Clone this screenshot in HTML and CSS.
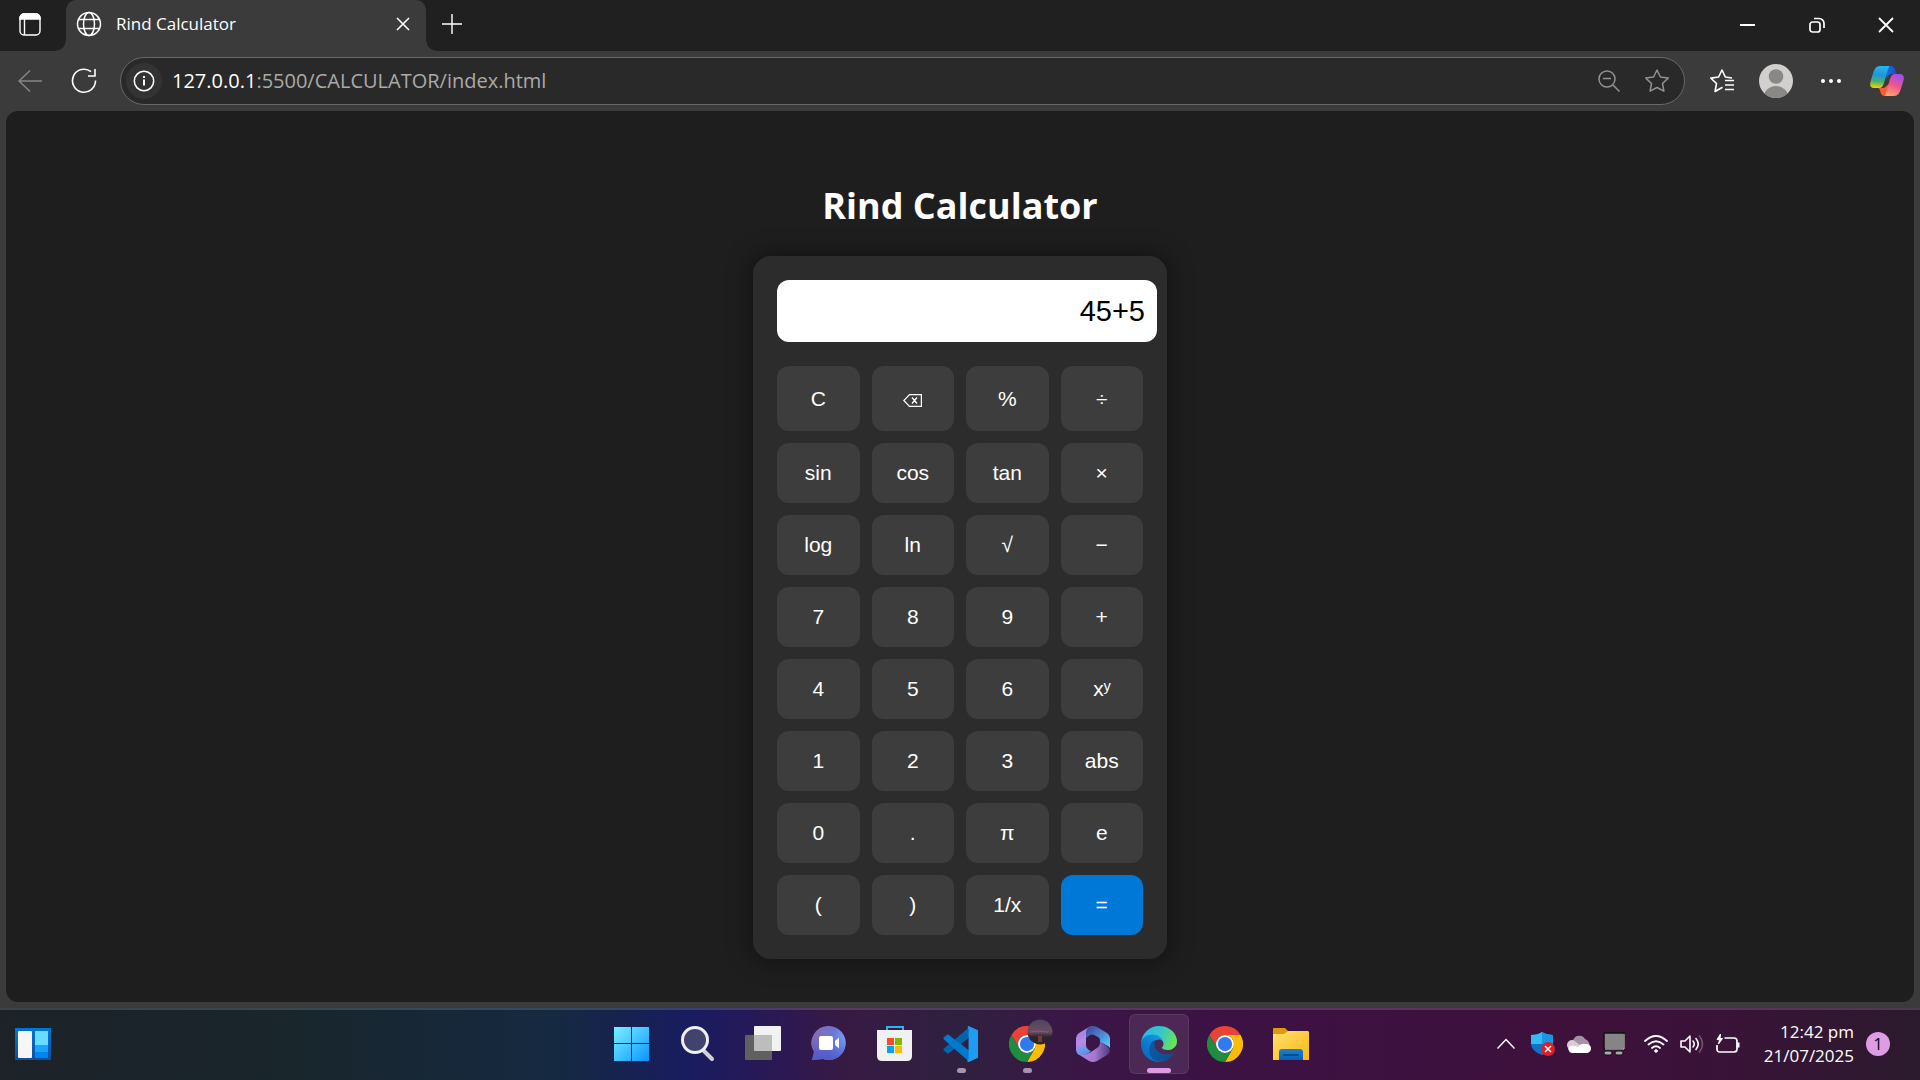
FILE: index.html
```html
<!DOCTYPE html>
<html lang="en">
<head>
<meta charset="utf-8">
<meta name="viewport" content="width=device-width, initial-scale=1">
<title>Rind Calculator</title>
<link rel="stylesheet" href="styles.css">
</head>
<body>
<div class="browser">
  <header class="tabstrip">
    <button class="icon-btn tab-actions" aria-label="Tab actions">
      <svg width="22" height="23" viewBox="0 0 22 23" fill="none" stroke="#fff" stroke-width="1.4"><rect x="1" y="1" width="20" height="21" rx="4"/><path d="M1 6V5a4 4 0 0 1 4-4h12a4 4 0 0 1 4 4v1z" fill="#fff"/><path d="M5.500 6v16"/></svg>
    </button>
    <div class="tab">
      <svg class="globe" width="26" height="26" viewBox="0 0 26 26" fill="none" stroke="#fff" stroke-width="1.500"><circle cx="13" cy="13" r="11.500"/><ellipse cx="13" cy="13" rx="5.500" ry="11.500"/><path d="M2.500 8.500h21M2.500 17.500h21"/></svg>
      <span class="tab-title">Rind Calculator</span>
      <button class="icon-btn" aria-label="Close tab">
        <svg width="14" height="14" viewBox="0 0 14 14" stroke="#fff" stroke-width="1.600"><path d="M1 1l12 12M13 1L1 13"/></svg>
      </button>
    </div>
    <button class="icon-btn new-tab" aria-label="New tab">
      <svg width="22" height="22" viewBox="0 0 22 22" stroke="#fff" stroke-width="1.400"><path d="M11 1v20M1 11h20"/></svg>
    </button>
    <div class="window-controls">
      <button class="icon-btn" aria-label="Minimize"><svg width="16" height="16" viewBox="0 0 16 16" stroke="#fff" stroke-width="2"><path d="M0 8h15"/></svg></button>
      <button class="icon-btn" aria-label="Restore"><svg width="16" height="16" viewBox="0 0 16 16" fill="none" stroke="#fff" stroke-width="1.700"><rect x="1" y="5" width="10" height="10" rx="2.500"/><path d="M5 1.500h5a5 5 0 0 1 5 5V11"/></svg></button>
      <button class="icon-btn" aria-label="Close"><svg width="16" height="16" viewBox="0 0 16 16" stroke="#fff" stroke-width="1.800"><path d="M1 1l14 14M15 1L1 15"/></svg></button>
    </div>
  </header>

  <div class="toolbar">
    <button class="icon-btn" aria-label="Back"><svg width="24" height="24" viewBox="0 0 24 24" fill="none" stroke="#868686" stroke-width="1.500"><path d="M24 12H1M12 1.500L1 12l11 10.500"/></svg></button>
    <button class="icon-btn reload" aria-label="Reload"><svg width="26" height="26" viewBox="0 0 26 26" fill="none" stroke="#fff" stroke-width="1.600"><path d="M20 3.600A11.500 11.500 0 1 0 24.500 12.500M24 1v7h-7"/></svg></button>
    <div class="address">
      <button class="icon-btn site-info" aria-label="Site information"><svg width="22" height="22" viewBox="0 0 22 22" fill="none" stroke="#fff" stroke-width="1.600"><circle cx="11" cy="11" r="9.700"/><path d="M11 9.500v6M11 6v2" stroke-width="2"/></svg></button>
      <a class="url" href="#"><span class="host">127.0.0.1</span>:5500/CALCULATOR/index.html</a>
      <button class="icon-btn" aria-label="Zoom"><svg width="22" height="22" viewBox="0 0 22 22" fill="none" stroke="#929292" stroke-width="1.500"><circle cx="9" cy="9" r="8"/><path d="M15 15l6.500 6.500M5 8.500h8"/></svg></button>
      <button class="icon-btn" aria-label="Add favorite"><svg width="26" height="26" viewBox="0 0 26 26" fill="none" stroke="#929292" stroke-width="1.500" stroke-linejoin="round"><path d="M13 2l3.400 7 7.800 1.100-5.700 5.400 1.400 7.700-6.900-3.700-6.900 3.700 1.400-7.700-5.700-5.400L9.600 9z"/></svg></button>
    </div>
    <button class="icon-btn" aria-label="Favorites"><svg width="26" height="26" viewBox="0 0 26 26" fill="none" stroke="#fff" stroke-width="1.600" stroke-linejoin="round"><path d="M23 10l-6.700-1L13 2 9.600 9l-7.800 1.100 5.700 5.400-1.400 8 7.400-4.200M16 12.500h9M16 17h9M16 21.500h9"/></svg></button>
    <button class="icon-btn avatar" aria-label="Profile"><svg width="34" height="34" viewBox="0 0 34 34"><defs><clipPath id="av"><circle cx="17" cy="17" r="17"/></clipPath></defs><g clip-path="url(#av)"><path fill="#d2d0ce" d="M0 0h34v34H0z"/><circle cx="17" cy="12.500" r="7.300" fill="#8b8784"/><ellipse cx="17" cy="34" rx="12.500" ry="12" fill="#8b8784"/></g></svg></button>
    <button class="icon-btn menu" aria-label="Settings and more"><svg width="20" height="4" viewBox="0 0 20 4" fill="#fff"><circle cx="2" cy="2" r="2"/><circle cx="10" cy="2" r="2"/><circle cx="18" cy="2" r="2"/></svg></button>
    <button class="icon-btn" aria-label="Copilot">
      <svg width="34" height="32" viewBox="0 0 34 32"><defs>
        <linearGradient id="c1" x1=".4" y1="0" x2=".3" y2="1"><stop offset="0" stop-color="#22b9ee"/><stop offset=".4" stop-color="#2292df"/><stop offset=".7" stop-color="#49b26b"/><stop offset="1" stop-color="#ffd000"/></linearGradient>
        <linearGradient id="c2" x1=".7" y1="0" x2=".3" y2="1"><stop offset="0" stop-color="#a04cf0"/><stop offset=".5" stop-color="#ee558f"/><stop offset="1" stop-color="#ffa36b"/></linearGradient>
        <linearGradient id="c3"><stop stop-color="#0a78dc"/><stop offset="1" stop-color="#2346d8"/></linearGradient></defs>
        <path fill="url(#c3)" d="M16 1h4.500c3 0 4.200 2 4.800 4.300L26.500 9h-5c-3 0-4 2-5 5z"/>
        <path fill="#ff5a36" d="M8 23h6l5-4-3 12h-1c-3 0-4-2-4.600-4.300C9.800 24.500 9.300 23 8 23z"/>
        <path fill="url(#c1)" d="M20 1H10C6 1 4.500 4 3.300 7.500L.7 16C-.6 20 .5 23 4 23h5c3 0 4-2 5-5l3.500-12C18.300 3 19 1 20 1z"/>
        <path fill="url(#c2)" d="M14 31h10c4 0 5.500-3 6.700-6.500l2.600-8.500c1.300-4 .2-7-3.300-7h-5c-3 0-4 2-5 5l-3.500 12c-.8 3-1.500 5-2.500 5z"/></svg>
    </button>
  </div>

  <main class="page">
    <h1 class="title">Rind Calculator</h1>
    <section class="calculator" aria-label="Calculator">
      <input class="display" type="text" value="45+5" aria-label="Expression" readonly>
      <div class="keys">
        <button class="key">C</button>
        <button class="key" aria-label="Backspace"><svg width="19" height="16" viewBox="0 -3 19 16" fill="none" stroke="#fff" stroke-width="1.300"><path d="M6.500.600H18.400V12.400H6.500L.8 6.500zM9 3.500l5 6M14 3.500l-5 6"/></svg></button>
        <button class="key">%</button>
        <button class="key">÷</button>
        <button class="key">sin</button>
        <button class="key">cos</button>
        <button class="key">tan</button>
        <button class="key">×</button>
        <button class="key">log</button>
        <button class="key">ln</button>
        <button class="key">√</button>
        <button class="key">−</button>
        <button class="key">7</button>
        <button class="key">8</button>
        <button class="key">9</button>
        <button class="key">+</button>
        <button class="key">4</button>
        <button class="key">5</button>
        <button class="key">6</button>
        <button class="key">xʸ</button>
        <button class="key">1</button>
        <button class="key">2</button>
        <button class="key">3</button>
        <button class="key">abs</button>
        <button class="key">0</button>
        <button class="key">.</button>
        <button class="key">π</button>
        <button class="key">e</button>
        <button class="key">(</button>
        <button class="key">)</button>
        <button class="key">1/x</button>
        <button class="key equals">=</button>
      </div>
    </section>
  </main>
</div>

<footer class="taskbar">
  <div class="widgets">
    <button class="icon-btn" aria-label="Widgets"><svg width="36" height="32" viewBox="0 0 36 32"><defs><linearGradient id="wd" x2="0" y2="1"><stop stop-color="#0078d4"/><stop offset="1" stop-color="#104e9c"/></linearGradient></defs><path fill="url(#wd)" d="M0 0h36v32H0z"/><rect x="3" y="3" width="14" height="27" rx="1" fill="#f6f6f6"/><path fill="#69dcff" d="M20 3h13v14H20z"/><path fill="#1ba4ff" d="M20 17h13v7H20z"/><path fill="#0086f0" d="M20 24h13v6H20z"/></svg></button>
  </div>
  <nav class="apps" aria-label="Apps">
    <button class="app" aria-label="Start"><svg width="36" height="36" viewBox="0 0 36 36"><defs><linearGradient id="st" gradientUnits="userSpaceOnUse" x1="0" y1="0" x2="36" y2="36"><stop stop-color="#7cf4ff"/><stop offset="1" stop-color="#0a94ff"/></linearGradient></defs><path fill="url(#st)" d="M1 1h17v16H1zM19 1h17v16H19zM1 18h17v17H1zM19 18h17v17H19z"/></svg></button>
    <button class="app" aria-label="Search"><svg width="36" height="36" viewBox="0 0 36 36"><path d="M24 24l9 9" stroke="#d2d2d6" stroke-width="4" stroke-linecap="round"/><circle cx="16" cy="14" r="12.500" fill="#42426f" stroke="#efeff1" stroke-width="3"/></svg></button>
    <button class="app" aria-label="Task view"><svg width="36" height="36" viewBox="0 0 36 36"><rect y="9" width="27" height="25" rx="1" fill="#606060"/><rect x="9" width="27" height="25" rx="1" fill="#f2f2f2"/><path fill="#bdbdbd" d="M9 9h18v16H9z"/></svg></button>
    <button class="app" aria-label="Chat"><svg width="36" height="36" viewBox="0 0 36 36"><defs><linearGradient id="ch" x1="0" y1=".2" x2="1" y2=".5"><stop stop-color="#8d68ad"/><stop offset=".6" stop-color="#6878d4"/><stop offset="1" stop-color="#77a8ff"/></linearGradient><linearGradient id="ch2" x2="0" y2="1"><stop offset=".3" stop-color="#5059c9" stop-opacity="0"/><stop offset="1" stop-color="#5059c9"/></linearGradient></defs><path fill="url(#ch)" d="M18 0a17 17 0 1 1-6 33L1 34l2-8A17 17 0 0 1 18 0z"/><path fill="url(#ch2)" d="M18 0a17 17 0 1 1-6 33L1 34l2-8A17 17 0 0 1 18 0z"/><rect x="8" y="10" width="14" height="14" rx="2" fill="#fff"/><path fill="#fff" d="M24 15l4-3.500v11L24 19z"/></svg></button>
    <button class="app" aria-label="Microsoft Store"><svg width="36" height="36" viewBox="0 0 36 36"><path d="M10 7V1h16v6" fill="none" stroke="#2bb5f0" stroke-width="2"/><path fill="#f1f1f1" d="M0 4h35v26q0 5-5 5H5q-5 0-5-5z"/><path fill="#f25022" d="M10 12h7v7h-7z"/><path fill="#7fba00" d="M18 12h7v7h-7z"/><path fill="#00a4ef" d="M10 20h7v7h-7z"/><path fill="#ffb900" d="M18 20h7v7h-7z"/></svg></button>
    <button class="app running" aria-label="Visual Studio Code"><svg width="36" height="36" viewBox="0 0 38 38"><path fill="#0065a9" stroke="#0065a9" stroke-width="3" stroke-linejoin="round" d="M2 25l3 2.500L28 10V3z"/><path fill="#007acc" stroke="#007acc" stroke-width="3" stroke-linejoin="round" d="M2 13l3-2.500L28 28v8z"/><path fill="#1f9cf0" d="M27 0l10 4.500v29L27 38q-2 0-1-2 1 0 1-2V4q0-2-1-2 0-2 1-2z"/></svg></button>
    <button class="app running chrome-profile" aria-label="Google Chrome, profile window">
      <svg width="36" height="36" viewBox="0 0 48 48"><path fill="#ea4335" d="M24 12h20.800A24 24 0 0 0 3.200 12l10.400 18A12 12 0 0 1 24 12z"/><path fill="#fbbc04" d="M34.400 30L24 48A24 24 0 0 0 44.800 12H24a12 12 0 0 1 10.400 18z"/><path fill="#1e8e3e" d="M13.600 30L3.200 12A24 24 0 0 0 24 48l10.400-18a12 12 0 0 1-20.800 0z"/><circle cx="24" cy="24" r="12" fill="#fff"/><circle cx="24" cy="24" r="9.500" fill="#2f7bed"/></svg>
      <svg class="profile-badge" width="26" height="26" viewBox="0 0 26 26"><defs><linearGradient id="pf" x2="0" y2="1"><stop stop-color="#4e4460"/><stop offset=".5" stop-color="#6b4e62"/><stop offset=".7" stop-color="#2e2230"/><stop offset="1" stop-color="#3a2025"/></linearGradient></defs><circle cx="13" cy="13" r="12.500" fill="url(#pf)"/><path d="M4 13l7-1 10 1" stroke="#8a5f68" fill="none"/><path fill="#6a4038" d="M11 17h4v6h-4z"/></svg>
    </button>
    <button class="app" aria-label="Microsoft 365"><svg width="34" height="36" viewBox="0 0 34 36"><defs><linearGradient id="m1" x2=".3" y2="1"><stop stop-color="#9d7ee0"/><stop offset=".6" stop-color="#b88ae8"/><stop offset="1" stop-color="#4d9be8"/></linearGradient><linearGradient id="m2" x2="1" y2="1"><stop stop-color="#3d3f99"/><stop offset=".6" stop-color="#4f93d8"/><stop offset="1" stop-color="#55dcff"/></linearGradient><linearGradient id="m3" x2="1" y2="0"><stop stop-color="#b478dd"/><stop offset=".5" stop-color="#a77bd0"/><stop offset="1" stop-color="#503a83"/></linearGradient></defs><path fill="url(#m1)" d="M13 1L3 7Q0 9 0 12v12q0 3 3 5 7 1 12-4-5-2-5-6v-7q0-5 7-12-2 0-4 1z"/><path fill="url(#m2)" d="M13 1q4-2 8 0l10 6q3 2 3 5v10q-1-2-4-3l-6-3v-2q0-2-2-3l-4-2q-2-1-4 0l-4 3V6q0-3 3-5z"/><path fill="url(#m3)" d="M2 28q7 2 13-2l6-4q3-2 3-6l7 4q6 5 0 9l-10 6q-4 2-8 0z"/></svg></button>
    <button class="app running active" aria-label="Microsoft Edge"><svg width="36" height="36" viewBox="0 0 256 256"><defs><linearGradient id="e1"><stop stop-color="#0c59a4"/><stop offset="1" stop-color="#114a8b"/></linearGradient><linearGradient id="e2" x1=".8" y1="0" x2=".2" y2="1"><stop stop-color="#1b9de2"/><stop offset=".5" stop-color="#0c7bd0"/><stop offset="1" stop-color="#0868b9"/></linearGradient><linearGradient id="e3" x1="0" y1=".3" x2="1" y2=".6"><stop stop-color="#28b8e8"/><stop offset=".5" stop-color="#35c6c8"/><stop offset="1" stop-color="#6be551"/></linearGradient></defs><path fill="url(#e2)" d="M105.730 241.420a79.200 79.200 0 0 1-22.740-21.340 80.720 80.720 0 0 1 29.530-120c3.120-1.470 8.450-4.130 15.540-4a32.350 32.350 0 0 1 25.690 13 31.880 31.880 0 0 1 6.360 18.660c0-.21 24.460-79.600-80-79.600-43.900 0-80 41.660-80 78.210a130.150 130.150 0 0 0 12.110 56 128 128 0 0 0 156.380 67.110 75.550 75.550 0 0 1-62.780-8z"/><path fill="url(#e1)" d="M231.050 190.460a93.730 93.730 0 0 1-10.540 4.710 101.870 101.870 0 0 1-35.900 6.460c-47.320 0-88.540-32.550-88.540-74.320A31.480 31.480 0 0 1 112.500 100c-42.800 1.800-53.800 46.400-53.800 72.530 0 73.880 68.090 81.370 82.760 81.370 7.910 0 19.840-2.300 27-4.560l1.310-.44a128.340 128.340 0 0 0 66.600-52.800 4 4 0 0 0-5.320-5.640z"/><path fill="url(#e3)" d="M152.330 148.860c-.81 1.050-3.300 2.500-3.300 5.660 0 2.610 1.700 5.120 4.720 7.230 14.380 10 41.490 8.680 41.560 8.680a59.560 59.560 0 0 0 30.270-8.350A61.380 61.380 0 0 0 256 109.230c.26-22.410-8-37.310-11.340-43.910C223.460 23.840 177.720 0 128 0A128 128 0 0 0 0 126.200c.48-36.540 36.800-66.050 80-66.050 3.500 0 23.460.34 42 10.070 16.340 8.580 24.900 18.940 30.850 29.210 6.180 10.670 7.280 24.150 7.280 29.520s-2.740 13.330-7.800 19.910z"/></svg></button>
    <button class="app" aria-label="Google Chrome"><svg width="36" height="36" viewBox="0 0 48 48"><path fill="#ea4335" d="M24 12h20.800A24 24 0 0 0 3.200 12l10.400 18A12 12 0 0 1 24 12z"/><path fill="#fbbc04" d="M34.400 30L24 48A24 24 0 0 0 44.800 12H24a12 12 0 0 1 10.400 18z"/><path fill="#1e8e3e" d="M13.600 30L3.200 12A24 24 0 0 0 24 48l10.400-18a12 12 0 0 1-20.800 0z"/><circle cx="24" cy="24" r="12" fill="#fff"/><circle cx="24" cy="24" r="9.500" fill="#2f7bed"/></svg></button>
    <button class="app" aria-label="File Explorer"><svg width="36" height="34" viewBox="0 0 36 34"><defs><linearGradient id="fx" x2="1" y2="1"><stop stop-color="#ffe06e"/><stop offset="1" stop-color="#fcb813"/></linearGradient><linearGradient id="fb" x2="0" y2="1"><stop stop-color="#1683d8"/><stop offset="1" stop-color="#0a5fb0"/></linearGradient></defs><path fill="#dd9b06" d="M0 2q0-1 1-1h11l4 4v3H0z"/><path fill="url(#fx)" d="M0 7h11l4-3h20l1 1v28H0z"/><path fill="url(#fb)" d="M6 33v-8q0-3 3-3h18q3 0 3 3v8z"/><path stroke="#0a4a8c" stroke-width="2" stroke-linecap="round" d="M11 28h14"/></svg></button>
  </nav>
  <div class="tray">
    <button class="icon-btn chevron" aria-label="Hidden icons"><svg width="18" height="12" viewBox="0 0 18 12" fill="none" stroke="#fff" stroke-width="1.500"><path d="M.5 10.500L9 1.500l8.500 9"/></svg></button>
    <svg width="24" height="24" viewBox="0 0 24 24" role="img" aria-label="Security"><path fill="#0c72c7" d="M11 0q4 3 11 3v9q0 7-11 11Q0 19 0 12V3q7 0 11-3z"/><path fill="#31bdf2" d="M11 0q4 3 11 3v9H0V3q7 0 11-3z"/><path fill="#1997e5" d="M11 0q4 3 11 3v9H11z"/><circle cx="17" cy="17" r="7" fill="#e01e28"/><path d="M14 14l6 6M20 14l-6 6" stroke="#fff" stroke-width="1.500"/></svg>
    <svg width="24" height="18" viewBox="0 0 24 18" role="img" aria-label="OneDrive"><path fill="#a590a7" d="M6 6a6.500 6.500 0 0 1 12-2 6 6 0 0 1 4 8H4z"/><path fill="#d5cad6" d="M1 13a5 5 0 0 1 8-6l8 6-4 4H5a5 5 0 0 1-4-4z"/><path fill="#fff" d="M5 18a4 4 0 0 1-2-7q4-1 8 1 3-4 8-3a4.500 4.500 0 0 1 1 9z"/></svg>
    <svg width="22" height="24" viewBox="0 0 22 24" role="img" aria-label="Device"><path fill="#858585" stroke="#111" stroke-width="1.500" d="M1 1h20v16H1z"/><path d="M2 17h19V2" fill="none" stroke="#ddd"/><rect x="1" y="19" width="8" height="4" rx="2" fill="#aaa" stroke="#111"/><rect x="12" y="19" width="8" height="4" rx="2" fill="#aaa" stroke="#111"/></svg>
    <button class="quick" aria-label="Network, sound and battery">
      <svg width="24" height="18" viewBox="0 0 24 18" fill="none" stroke="#fff" stroke-width="1.800" stroke-linecap="round"><path d="M1 6q11-10 22 0M4.500 9.500q7.500-6.500 15 0M8 13q4-3.500 8 0"/><circle cx="12" cy="16" r="1.300" fill="#fff" stroke-width="1"/></svg>
      <svg width="24" height="20" viewBox="0 0 24 20" fill="none" stroke="#fff" stroke-width="1.600" stroke-linecap="round" stroke-linejoin="round"><path d="M1 7v6h4l5 5V2L5 7zM13 7q2.500 3 0 6M16 4.500q4.500 5.500 0 11"/><path d="M19.500 2q6 8 0 16" stroke="#725171"/></svg>
      <svg width="24" height="20" viewBox="0 0 24 20" fill="none" stroke="#fff" stroke-width="1.700"><path d="M8.500 4H18q3 0 3 3v8q0 3-3 3H4q-3 0-3-3v-4"/><path d="M22 8.500v5" stroke-width="3"/><path fill="#fff" stroke-width="1" d="M4.500 0L1 5.500h2.500L2.500 10l4-5.500H4z"/></svg>
    </button>
    <button class="clock"><time>12:42 pm</time><time>21/07/2025</time></button>
    <span class="notice">1</span>
  </div>
</footer>
</body>
</html>
```
FILE: styles.css
```css
* {
  box-sizing: border-box;
}

body {
  margin: 0;
  min-height: 100vh;
  display: flex;
  flex-direction: column;
  background: #3b3b3b;
  color: #fff;
  font-family: "Open Sans", "Noto Sans", sans-serif;
}

button {
  border: 0;
  padding: 0;
  background: none;
  color: inherit;
  font: inherit;
}

svg {
  display: block;
  flex: none;
}

.icon-btn {
  display: flex;
  align-items: center;
  justify-content: center;
}

/* Browser frame */
.browser {
  flex: 1;
  display: flex;
  flex-direction: column;
}

.tabstrip {
  display: flex;
  align-items: center;
  height: 51px;
  padding-right: 26px;
  background: #202020;
}

.tab-actions {
  width: 66px;
  padding: 0 6px 2px 0;
}

.tab {
  position: relative;
  width: 360px;
  height: 51px;
  display: flex;
  align-items: center;
  gap: 14px;
  padding: 0 16px 3px 10px;
  border-radius: 10px 10px 0 0;
  background: #3b3b3b;
}

.tab::before,
.tab::after {
  content: "";
  position: absolute;
  bottom: 0;
  width: 10px;
  height: 10px;
}

.tab::before {
  right: 100%;
  background: radial-gradient(circle at 0 0, #202020 9px, #3b3b3b 10px);
}

.tab::after {
  left: 100%;
  background: radial-gradient(circle at 100% 0, #202020 9px, #3b3b3b 10px);
}

.tab-title {
  flex: 1;
  font-size: 17px;
  line-height: 24px;
}

.new-tab {
  padding: 0 0 4px 15px;
}

.window-controls {
  margin-left: auto;
  padding-bottom: 2px;
  display: flex;
  gap: 53px;
}

.toolbar {
  display: flex;
  align-items: center;
  height: 60px;
  padding: 0 16px 0 18px;
}

.reload {
  margin-left: 29px;
}

.address {
  flex: 1;
  display: flex;
  align-items: center;
  gap: 24px;
  height: 48px;
  margin: 0 24px 0 23px;
  padding: 0 14px 0 5px;
  border: 1px solid #686868;
  border-radius: 24px;
  background: #292929;
}

.site-info {
  width: 36px;
  height: 36px;
  border-radius: 50%;
  background: #333;
}

.url {
  flex: 1;
  margin-left: -14px;
  color: #aaa;
  font-size: 20px;
  line-height: 28px;
  text-decoration: none;
}

.host {
  color: #fff;
}

.avatar {
  margin: 0 28px 0 24px;
}

.menu {
  margin-right: 29px;
}

/* Calculator page */
.page {
  flex: 1;
  display: flex;
  flex-direction: column;
  align-items: center;
  margin: 0 6px 6px;
  padding: 68px 24px 43px;
  border-radius: 12px;
  background: #1e1e1e;
}

.title {
  margin: 0 0 24px;
  font-size: 36px;
  line-height: 53px;
}

.calculator {
  width: 414px;
  padding: 24px;
  border-radius: 18px;
  background: #2c2c2c;
  box-shadow: 0 0 24px rgba(0, 0, 0, 0.5);
}

.display {
  display: block;
  width: 380px;
  height: 62px;
  margin-bottom: 24px;
  padding: 12px;
  border: 0;
  border-radius: 12px;
  background: #fff;
  color: #000;
  font-family: "Liberation Sans", Arial, sans-serif;
  font-size: 29px;
  text-align: right;
}

.keys {
  display: grid;
  grid-template-columns: repeat(4, 1fr);
  grid-template-rows: 65px;
  grid-auto-rows: 60px;
  gap: 12px;
}

.key {
  display: flex;
  align-items: center;
  justify-content: center;
  border-radius: 12px;
  background: #3d3d3d;
  font-family: "Liberation Sans", Arial, sans-serif;
  font-size: 21px;
}

.equals {
  background: #0078d7;
}

/* Taskbar */
.taskbar {
  display: grid;
  grid-template-columns: 1fr auto 1fr;
  align-items: center;
  height: 72px;
  padding: 0 30px 2px 15px;
  border-top: 2px solid rgba(255, 255, 255, 0.15);
  background: linear-gradient(90deg, #1c2228 0%, #19262c 15%, #152941 29%, #191c60 36%, #2d1852 41%, #371a43 44%, #2f203f 50%, #3a1646 56%, #3c1244 63%, #3e113b 82%, #391338 90%, #2b1a2d 100%) border-box;
}

.apps {
  display: flex;
  gap: 6px;
  margin-left: 16px;
}

.app {
  position: relative;
  width: 60px;
  height: 60px;
  display: flex;
  align-items: center;
  justify-content: center;
  border-radius: 6px;
}

.active {
  background: rgba(255, 255, 255, 0.09);
  box-shadow: inset 0 0 0 1px rgba(255, 255, 255, 0.08);
}

.running::after {
  content: "";
  position: absolute;
  bottom: 1px;
  left: 50%;
  width: 9px;
  height: 5px;
  margin-left: -4px;
  border-radius: 3px;
  background: #a694ab;
}

.active::after {
  width: 24px;
  margin-left: -12px;
  background: #dd9ce4;
}

.profile-badge {
  position: absolute;
  top: 5px;
  right: 4px;
}

.tray {
  display: flex;
  align-items: center;
  justify-content: flex-end;
  gap: 12px;
}

.chevron {
  margin-right: 4px;
}

.quick {
  display: flex;
  align-items: center;
  gap: 12px;
  margin: 0 12px 0 7px;
}

.clock {
  display: flex;
  flex-direction: column;
  align-items: flex-end;
  font-size: 17px;
  line-height: 24px;
}

.notice {
  width: 24px;
  height: 24px;
  border-radius: 50%;
  background: #dd9ce4;
  color: #000;
  font-size: 16px;
  line-height: 24px;
  text-align: center;
}
```
